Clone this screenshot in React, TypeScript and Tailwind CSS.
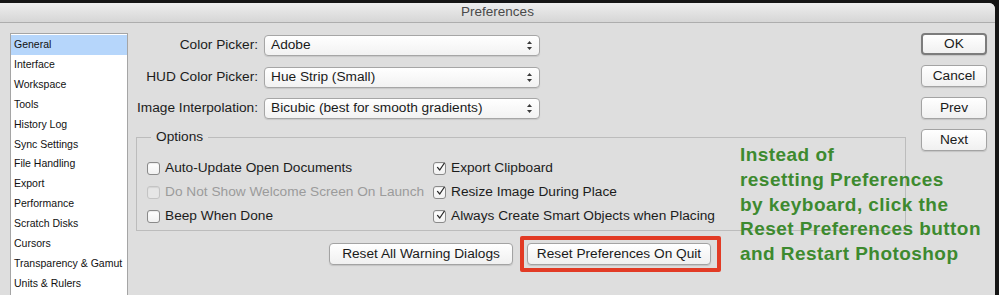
import React from 'react';

const sideItems = [
  'General',
  'Interface',
  'Workspace',
  'Tools',
  'History Log',
  'Sync Settings',
  'File Handling',
  'Export',
  'Performance',
  'Scratch Disks',
  'Cursors',
  'Transparency & Gamut',
  'Units & Rulers',
];

const selects = [
  { label: 'Color Picker:', value: 'Adobe' },
  { label: 'HUD Color Picker:', value: 'Hue Strip (Small)' },
  { label: 'Image Interpolation:', value: 'Bicubic (best for smooth gradients)' },
];

const Arrows: React.FC = () => (
  <svg width="7" height="11" viewBox="0 0 7 11" className="shrink-0">
    <path d="M3.5 1 L6 4 L1 4 Z" fill="#3a3a3a" />
    <path d="M3.5 10 L6 7 L1 7 Z" fill="#3a3a3a" />
  </svg>
);

const Check: React.FC<{ label: string; checked?: boolean; disabled?: boolean }> = ({ label, checked, disabled }) => (
  <div className="flex items-center h-[24px] gap-[5px]">
    <div
      className={`w-[13px] h-[13px] shrink-0 rounded-[3px] border flex items-center justify-center shadow-[inset_0_1px_1px_rgba(0,0,0,0.08)] ${
        disabled ? 'border-[#c4c4c4] bg-[#e6e6e6]' : 'border-[#8a8a8a] bg-gradient-to-b from-white to-[#f1f1f1]'
      }`}
    >
      {checked && (
        <svg width="12" height="12" viewBox="0 0 12 12" className="-mt-[3px] ml-[2px]">
          <path d="M2 6.5 L5 10 L11 1" fill="none" stroke="#2a2a2a" strokeWidth="1.7" strokeLinecap="round" strokeLinejoin="round" />
        </svg>
      )}
    </div>
    <span className={`text-[13.7px] whitespace-nowrap ${disabled ? 'text-[#9b9b9b]' : 'text-[#1c1c1c]'}`}>{label}</span>
  </div>
);

const MacButton: React.FC<{ label: string; width: string; strong?: boolean }> = ({ label, width, strong }) => (
  <div
    className={`${width} h-[22px] rounded-[4px] bg-gradient-to-b from-white to-[#f0f0f0] flex items-center justify-center text-[13.7px] text-[#1a1a1a] whitespace-nowrap shadow-[0_1px_1px_rgba(0,0,0,0.12)] ${
      strong ? 'border-2 border-[#7c7c7c]' : 'border border-[#a3a3a3]'
    }`}
  >
    {label}
  </div>
);

export default function App() {
  return (
    <div className="w-[999px] h-[295px] bg-[#151515] overflow-hidden" style={{ fontFamily: '"Liberation Sans", Arial, sans-serif' }}>
      <div className="mt-[3px] w-[995px] h-[292px] bg-[#dedede] rounded-tr-[6px] rounded-tl-[2px] flex flex-col relative">
        <div className="h-[20px] shrink-0 bg-gradient-to-b from-[#eeeeee] to-[#d6d6d6] border-b border-[#adadad] rounded-tr-[6px] flex items-center justify-center text-[13.5px] text-[#4a4a4a]">
          Preferences
        </div>

        <div className="flex flex-1">
          {/* sidebar */}
          <div className="ml-[10px] mt-[10px] w-[118px] bg-white border border-[#a5a5a5] border-b-0 pt-[1px]">
            {sideItems.map((item, i) => (
              <div
                key={item}
                className={`h-[19.9px] flex items-center pl-[3px] text-[10.5px] text-[#111] whitespace-nowrap ${i === 0 ? 'bg-[#b6d6fb]' : ''}`}
              >
                {item}
              </div>
            ))}
          </div>

          {/* main */}
          <div className="ml-[8px] w-[770px] flex flex-col">
            <div className="mt-[12px] flex flex-col gap-[10.5px]">
              {selects.map((s) => (
                <div key={s.label} className="flex items-center">
                  <div className="w-[122px] text-right text-[13.7px] text-[#1c1c1c] whitespace-nowrap">{s.label}</div>
                  <div className="ml-[6px] w-[276px] h-[21px] rounded-[4px] border border-[#a6a6a6] bg-gradient-to-b from-white to-[#f2f2f2] shadow-[0_1px_1px_rgba(0,0,0,0.1)] flex items-center justify-between pl-[6px] pr-[6px] text-[13.7px] text-[#1a1a1a]">
                    <span>{s.value}</span>
                    <Arrows />
                  </div>
                </div>
              ))}
            </div>

            <fieldset className="mt-[10px] w-[770px] h-[102px] border border-[#bcbcbc] px-[10px] pt-[10px]">
              <legend className="ml-[4px] px-[5px] text-[13.7px] text-[#1c1c1c] leading-[16px]">Options</legend>
              <div className="flex mt-[1px]">
                <div className="w-[286px] flex flex-col">
                  <Check label="Auto-Update Open Documents" />
                  <Check label="Do Not Show Welcome Screen On Launch" disabled />
                  <Check label="Beep When Done" />
                </div>
                <div className="flex flex-col">
                  <Check label="Export Clipboard" checked />
                  <Check label="Resize Image During Place" checked />
                  <Check label="Always Create Smart Objects when Placing" checked />
                </div>
              </div>
            </fieldset>

            <div className="mt-[12px] ml-[193px] flex gap-[14px]">
              <MacButton label="Reset All Warning Dialogs" width="w-[184px]" />
              <div className="relative">
                <MacButton label="Reset Preferences On Quit" width="w-[184px]" />
                <div className="absolute -left-[7px] -top-[7px] w-[201px] h-[36px] border-[4px] border-[#e23b25] rounded-[2px]" />
              </div>
            </div>
          </div>

          {/* right buttons */}
          <div className="ml-[15px] mt-[10px] flex flex-col gap-[10px]">
            <MacButton label="OK" width="w-[66px]" strong />
            <MacButton label="Cancel" width="w-[66px]" />
            <MacButton label="Prev" width="w-[66px]" />
            <MacButton label="Next" width="w-[66px]" />
          </div>
        </div>

        <div className="absolute left-[740px] top-[140px] text-[19px] tracking-[0.45px] leading-[24.8px] font-bold text-[#3d8a2f] whitespace-nowrap">
          <div>Instead of</div>
          <div>resetting Preferences</div>
          <div>by keyboard, click the</div>
          <div>Reset Preferences button</div>
          <div>and Restart Photoshop</div>
        </div>
      </div>
    </div>
  );
}
